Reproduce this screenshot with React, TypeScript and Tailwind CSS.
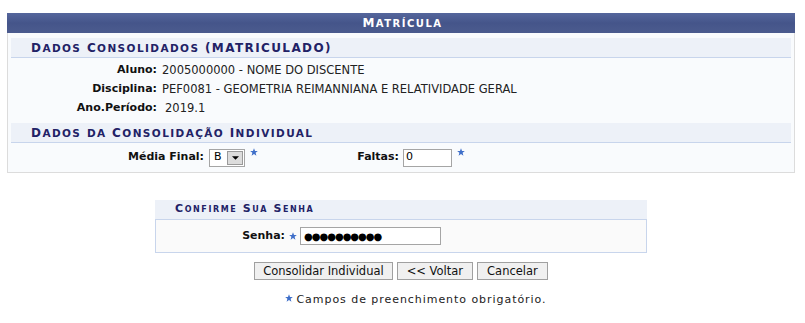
import React from "react";

const font = "font-['Verdana','DejaVu_Sans',sans-serif]";

function Star({ className = "" }: { className?: string }) {
  return (
    <svg viewBox="0 0 10 10" className={`w-[8px] h-[8px] ${className}`}>
      <polygon
        points="5,0.3 6.3,3.6 9.8,3.7 7,5.9 8,9.6 5,7.4 2,9.6 3,5.9 0.2,3.7 3.7,3.6"
        fill="#3f6fc9"
      />
    </svg>
  );
}

// small caps drawn by hand: capitals keep the size, lowercase letters get the smaller class
function Caps({ text, small }: { text: string; small: string }) {
  const parts: { low: boolean; s: string }[] = [];
  for (const ch of text) {
    const low = ch !== ch.toUpperCase();
    const last = parts[parts.length - 1];
    if (last && last.low === low) last.s += ch;
    else parts.push({ low, s: ch });
  }
  return (
    <span>
      {parts.map((p, i) =>
        p.low ? <span key={i} className={small}>{p.s.toUpperCase()}</span> : <span key={i}>{p.s}</span>
      )}
    </span>
  );
}

function SubHeader({ text }: { text: string }) {
  return (
    <div className="bg-[#edf1f8] border-b border-[#c8d5ec] text-[#222266] font-bold flex items-center h-[20px] pl-[20px] text-[12px] tracking-[1.4px]">
      <Caps text={text} small="text-[10.5px]" />
    </div>
  );
}

function InfoRow({ label, value, pad = false }: { label: string; value: string; pad?: boolean }) {
  return (
    <div className="flex h-[19px] items-center">
      <div className="w-[146px] text-right font-bold text-[#111]">{label}</div>
      <div className={`${pad ? "pl-[8px]" : "pl-[5px]"} text-[#222] text-[11.5px]`}>{value}</div>
    </div>
  );
}

export default function App() {
  return (
    <div className={`${font} text-[11px] bg-white w-[805px] h-[323px] pt-[13px]`}>
      <div className="ml-[7px] w-[788px]">
        <div className="h-[20px] bg-gradient-to-b from-[#55669c] via-[#45558a] to-[#4b5b8e] text-white font-bold text-[12px] tracking-[1.5px] flex items-center justify-center pl-[3px]">
          <Caps text="Matrícula" small="text-[10px]" />
        </div>
        <div className="border border-t-0 border-[#dcdcdc] bg-[#f9fbfd] px-[3px] pt-[5px]">
          <SubHeader text="Dados Consolidados (MATRICULADO)" />
          <div className="pt-[3px] pb-[5px]">
            <InfoRow label="Aluno:" value="2005000000 - NOME DO DISCENTE" />
            <InfoRow label="Disciplina:" value="PEF0081 - GEOMETRIA REIMANNIANA E RELATIVIDADE GERAL" />
            <InfoRow label="Ano.Período:" value="2019.1" pad />
          </div>
          <SubHeader text="Dados da Consolidação Individual" />
          <div className="h-[29px] flex items-center">
            <div className="w-[193px] text-right font-bold text-[#111]">Média Final:</div>
            <div className="ml-[5px] w-[36px] h-[18px] border border-[#a5a5a5] bg-white flex items-center">
              <span className="pl-[4px] flex-1">B</span>
              <div className="w-[16px] h-[14px] mr-[1px] bg-[#dcdcdc] border border-[#9a9a9a] flex items-center justify-center">
                <svg viewBox="0 0 8 4" className="w-[7px] h-[4px]">
                  <polygon points="0,0 8,0 4,4" fill="#000" />
                </svg>
              </div>
            </div>
            <Star className="ml-[5px] self-start mt-[5px]" />
            <div className="w-[141px] text-right font-bold text-[#111]">Faltas:</div>
            <div className="ml-[4px] w-[49px] h-[18px] border border-[#a5a5a5] bg-white flex items-center pl-[2px]">
              0
            </div>
            <Star className="ml-[5px] self-start mt-[5px]" />
          </div>
        </div>

        <div className="ml-[148px] w-[492px] mt-[27px]">
          <div className="bg-[#edf1f8] border-b border-[#c8d5ec] text-[#222266] font-bold [font-variant:small-caps] flex items-center h-[20px] pl-[20px] text-[11px] tracking-[1.6px]">
            Confirme Sua Senha
          </div>
          <div className="border border-t-0 border-[#c8d5ec] bg-[#fafafa] h-[33px] flex items-center">
            <div className="w-[129px] text-right font-bold text-[#111]">Senha:</div>
            <Star className="ml-[4px]" />
            <div className="ml-[3px] w-[141px] h-[18px] border border-[#a5a5a5] bg-white flex items-center pl-[3px] text-[10px] tracking-[-1px]">
              ●●●●●●●●●●
            </div>
          </div>
        </div>

        <div className="flex justify-center gap-[4px] mt-[9px] text-[11.5px]">
          <button className="h-[18px] px-[8px] border border-[#a0a0a0] bg-[#f0f0f0] text-[#111]">Consolidar Individual</button>
          <button className="h-[18px] px-[9px] border border-[#a0a0a0] bg-[#f0f0f0] text-[#111]">&lt;&lt; Voltar</button>
          <button className="h-[18px] px-[9px] border border-[#a0a0a0] bg-[#f0f0f0] text-[#111]">Cancelar</button>
        </div>

        <div className="flex justify-center items-center mt-[12px] pl-[30px] text-[11px] tracking-[0.95px] text-[#222]">
          <Star className="mr-[3px] -mt-[4px]" />
          <span>Campos de preenchimento obrigatório.</span>
        </div>
      </div>
    </div>
  );
}
